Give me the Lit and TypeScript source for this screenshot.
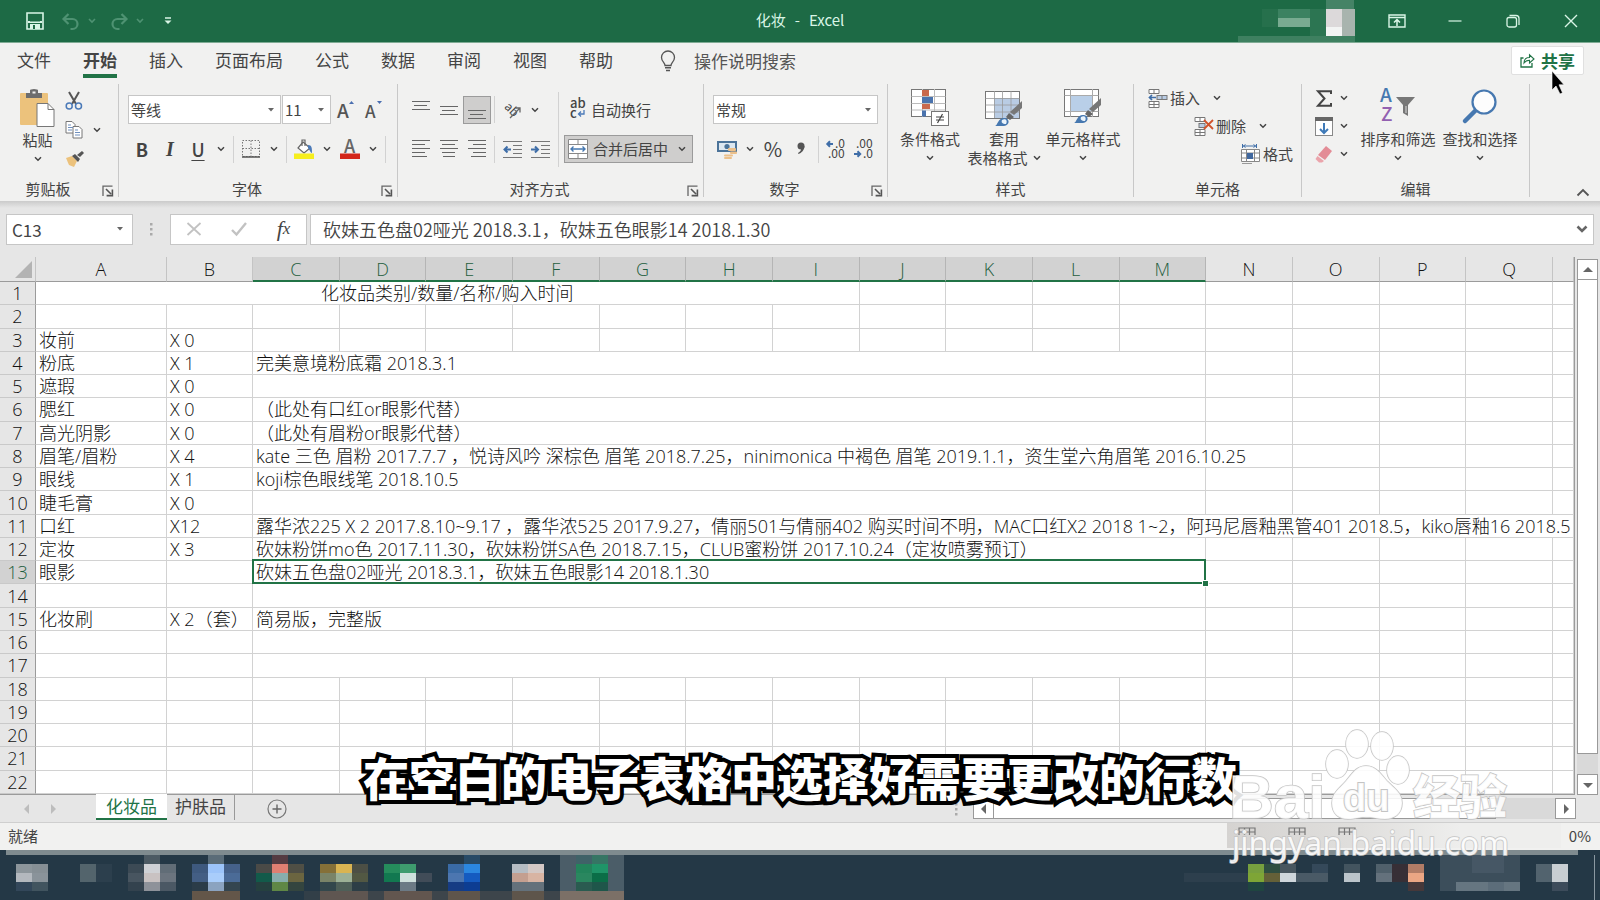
import { LitElement, html, svg, css, nothing } from "lit";
import { customElement } from "lit/decorators.js";
import { classMap } from "lit/directives/class-map.js";

const icon = (w: number, h: number, body: unknown) => html`<svg
  class="ico"
  width=${w}
  height=${h}
  viewBox="0 0 ${w} ${h}"
  aria-hidden="true"
>${body}</svg>`;

const chevron = () => icon(8, 6, svg`<path d="M1 1.2 4 4.2 7 1.2" fill="none" stroke="#444" stroke-width="1.5"/>`);
const triangle = () => icon(8, 6, svg`<path d="M1 1h6L4 4.6z" fill="#666"/>`);
const launcher = () =>
  icon(12, 12, svg`<path d="M1 11V1.2h9.5" fill="none" stroke="#666" stroke-width="1.3"/><path d="M4 4l5 5M10.4 4.6v6H4.6" fill="none" stroke="#555" stroke-width="1.6"/>`);

const lines = (rows: Array<[number, number, number]>) =>
  icon(18, 20, rows.map(([x, y, w]) => svg`<rect x=${x} y=${y} width=${w} height="1" fill="#666"/>`));

const brush = svg`<path d="M37 13 37 20 29 27 25 24z" fill="#777"/><path d="M24 25l5 4-4 3-4-3z" fill="#666"/><path d="M10 38c3-1 3-9 10-8 5 1 5 7-1 8z" fill="#4678b0"/><path d="M17 32c3-2 6 0 4 4-4 0-5-2-4-4z" fill="#e8f2fb"/>`;

const I = {
  save: () =>
    icon(18, 18, svg`<path d="M1 1h16v16H1z" fill="none" stroke="#d9f5e6" stroke-width="1.600"/><path d="M2 9.5h14v1.5H2zM4 12h10v5H4z" fill="#d9f5e6"/><path d="M7 13h2v4H7z" fill="#1d6a45"/><path d="M2 9h2v2H2zM14 9h2v2h-2z" fill="#d9f5e6"/>`),
  undo: () =>
    icon(18, 17, svg`<path d="M6.500 1 1.500 6l5 5M2 6h8.500a5 5 0 0 1 0 10H8.500" fill="none" stroke="#4e9272" stroke-width="2.2"/>`),
  redo: () =>
    icon(18, 17, svg`<path d="M11.500 1l5 5-5 5M16 6H7.500a5 5 0 0 0 0 10h2" fill="none" stroke="#4e9272" stroke-width="2.200"/>`),
  dimChev: () => icon(8, 6, svg`<path d="M1 1l3 3 3-3" fill="none" stroke="#4e9272" stroke-width="1.6"/>`),
  customise: () => icon(8, 8, svg`<path d="M1 1h6" stroke="#d9f5e6" stroke-width="1.5"/><path d="M.5 3.500h7L4 7z" fill="#d9f5e6"/>`),
  display: () =>
    icon(18, 14, svg`<path d="M1 1h16v12H1zM1 3.500h16" fill="none" stroke="#d9f5e6" stroke-width="1.4"/><path d="M9 12V6M6 8.500 9 5.600l3 2.900" fill="none" stroke="#d9f5e6" stroke-width="1.500"/>`),
  min: () => icon(14, 14, svg`<path d="M.5 7h13" stroke="#d9f5e6" stroke-width="1.200"/>`),
  restore: () =>
    icon(14, 14, svg`<rect x="1" y="3.500" width="9.500" height="9.500" rx="2" fill="none" stroke="#d9f5e6" stroke-width="1.300"/><path d="M3.500 1.500H10a3 3 0 0 1 3 3V11" fill="none" stroke="#d9f5e6" stroke-width="1.300"/>`),
  close: () => icon(14, 14, svg`<path d="M1 1l12 12M13 1 1 13" stroke="#d9f5e6" stroke-width="1.400"/>`),
  bulb: () =>
    icon(16, 22, svg`<path d="M5 15.500c0-3-3.500-4-3.500-8a6.500 6.500 0 0 1 13 0c0 4-3.500 5-3.500 8z" fill="none" stroke="#555" stroke-width="1.300"/><path d="M5 17.800h6M6 20.500h4" stroke="#555" stroke-width="1.500"/>`),
  share: () =>
    icon(15, 15, svg`<path d="M3.500 5H1v9h11v-4" fill="none" stroke="#217346" stroke-width="1.300"/><path d="M4 10c0-4 2.500-5.500 5.500-5.500V1.800L14 6l-4.500 4V7.200C7 7.200 5.500 7.800 4 10z" fill="none" stroke="#217346" stroke-width="1.100"/>`),
  paste: () =>
    icon(35, 38, svg`<rect x="0" y="4" width="28" height="32" rx="1" fill="#ecc27c"/><path d="M6 4h4V1.500Q10 0 14 0t4 1.500V4h4v5H6z" fill="#6d6d6d"/><rect x="12.500" y="2.500" width="3" height="2" fill="#f1f1f0"/><path d="M17 14.500h11l6 6V37.500H17z" fill="#fff" stroke="#777"/><path d="M28 14.500v6h6" fill="none" stroke="#777"/>`),
  cut: () =>
    icon(18, 19, svg`<path d="M4 1l7 12M14 1 7 13" stroke="#555" stroke-width="2"/><circle cx="4.200" cy="15" r="3" fill="none" stroke="#4b7ab8" stroke-width="1.500"/><circle cx="13.500" cy="15" r="3" fill="none" stroke="#4b7ab8" stroke-width="1.500"/>`),
  copy: () =>
    icon(18, 19, svg`<path d="M1 1.500h6l3 3V13H1z" fill="#fff" stroke="#777"/><path d="M8 6.500h6l3 3V18H8z" fill="#fff" stroke="#777"/><path d="M3 5h3M3 7.500h5M3 10h4M10 10h3M10 12.500h5M10 15h5" stroke="#6f8fbd"/>`),
  painter: () =>
    icon(19, 17, svg`<path d="M1 8l6-2 5 5-3 6-5-2z" fill="#ecc27c"/><path d="M7 6l3-2 5 5-2 3z" fill="#555"/><path d="M12 5l5-4 2 2-4 4z" fill="#555"/>`),
  growA: () =>
    icon(18, 20, svg`<text x="0" y="18" font-size="19" font-weight="500" fill="#555">A</text><path d="M12 4l2.500-3L17 4z" fill="#4b6fb0"/>`),
  shrinkA: () =>
    icon(18, 20, svg`<text x="0" y="18" font-size="17" font-weight="500" fill="#555">A</text><path d="M12 1h5l-2.500 3z" fill="#4b6fb0"/>`),
  borders: () =>
    icon(18, 18, svg`<path d="M.5.500h17v16H.5zM9 .500v16M.5 8.500h17" fill="none" stroke="#777" stroke-dasharray="1.500 1.500"/><path d="M0 17h18" stroke="#555" stroke-width="1.500"/>`),
  fill: () =>
    icon(20, 20, svg`<path d="M9 3l7 6-6 5-6-5z" fill="#fff" stroke="#666" stroke-width="1.200"/><path d="M8 7V1h3v6" fill="none" stroke="#666" stroke-width="1.200"/><path d="M14 6c4 0 4 3 4 8-1.500 0-2-3-4-5z" fill="#4b7ab8"/><rect y="14.500" width="20" height="5.500" fill="#f6ee1e"/>`),
  fontColor: () =>
    icon(20, 20, svg`<text x="4" y="14" font-size="18" font-weight="500" fill="#666">A</text><rect y="14.500" width="20" height="5.500" fill="#d3261a"/>`),
  orient: () =>
    icon(19, 19, svg`<text x="1" y="11" font-size="12" fill="#444" transform="rotate(45 5 9)">ab</text><path d="M7 18 17 8M12.500 8H17v4.500" fill="none" stroke="#666" stroke-width="1.300"/>`),
  wrap: () =>
    icon(16, 20, svg`<text x="0" y="8" font-size="13" font-weight="500" fill="#444">ab</text><text x="0" y="18" font-size="13" font-weight="500" fill="#444">c</text><path d="M14 10v4H9M11 11.500 8.500 14l2.500 2.500" fill="none" stroke="#4b7ab8" stroke-width="1.300"/>`),
  merge: () =>
    icon(20, 20, svg`<path d="M.5.500h19v19H.5z" fill="#fff" stroke="#888"/><path d="M.5 5.500h19M.5 14.500h19M10 0v5.500M10 14.500V20" stroke="#888"/><path d="M3 10h14M5.500 7.500 3 10l2.500 2.500M14.500 7.500 17 10l-2.500 2.500" fill="none" stroke="#4678b0" stroke-width="1.400"/>`),
  money: () =>
    icon(20, 19, svg`<rect x="0" y="1" width="20" height="11" fill="#4b7399"/><rect x="2" y="3" width="16" height="7" fill="#dce7f0"/><circle cx="10" cy="6.500" r="2.600" fill="#4b7399"/><g fill="#ecc08a"><rect x="11" y="8" width="8" height="3" rx="1"/><rect x="13" y="11.500" width="7" height="2.500" rx="1"/><rect x="7" y="14.500" width="9" height="2" rx="1"/><rect x="7" y="17" width="8" height="2" rx="1"/></g>`),
  comma: () =>
    icon(10, 14, svg`<circle cx="5" cy="4" r="3.500" fill="#555"/><path d="M8.500 4c0 4-3 7-6 8l-.5-1C4 10 5.500 8 5 6z" fill="#555"/>`),
  inc: () =>
    icon(20, 20, svg`<path d="M7 5H1.500M4 2.300 1.300 5 4 7.700" fill="none" stroke="#3f6ea8" stroke-width="2"/><text x="9" y="9" font-size="12" fill="#444">.0</text><text x="2" y="19" font-size="12" fill="#444">.00</text>`),
  dec: () =>
    icon(20, 20, svg`<text x="2" y="9" font-size="12" fill="#444">.00</text><path d="M0 15h6M3.500 12.300 6.200 15l-2.700 2.700" fill="none" stroke="#3f6ea8" stroke-width="2"/><text x="9" y="19" font-size="12" fill="#444">.0</text>`),
  cond: () =>
    icon(38, 38, svg`<rect x=".5" y="1.500" width="34" height="27" fill="#fff" stroke="#777"/><path d="M.5 8.500h34M.5 15.500h34M.5 22h34M11.500 1v28M23.500 1v28" stroke="#bbb"/><rect x="11" y="2" width="7" height="6" fill="#c9694c"/><rect x="11" y="9" width="11" height="6" fill="#4a73ad"/><rect x="11" y="16" width="8" height="5" fill="#c9694c"/><rect x="11" y="22.500" width="4" height="6" fill="#4a73ad"/><rect x="20.500" y="23.500" width="17" height="14" fill="#fff" stroke="#777"/><path d="M25 29h8M25 32h8M31.500 26l-5 9" stroke="#444" stroke-width="1.200"/>`),
  tableFmt: () =>
    icon(38, 38, svg`<rect x=".5" y="3.500" width="34" height="27" fill="#fff" stroke="#777"/><rect x="9" y="10" width="25" height="20" fill="#b9cce4"/><path d="M.5 10.500h34M.5 17h34M.5 24h34M9.500 3v27M17.500 3v27M26 3v27" stroke="#999" stroke-width=".8"/>${brush}`),
  cellStyle: () =>
    icon(38, 38, svg`<rect x=".5" y="1.500" width="34" height="27" fill="#fff" stroke="#777"/><path d="M.5 7.500h34M6.500 1v28M28.500 1v28M.5 23.500h34" stroke="#aaa"/><rect x="7" y="8" width="21" height="15" fill="#b9cfe8"/><g transform="translate(0 -3)">${brush}</g>`),
  insert: () =>
    icon(20, 19, svg`<path d="M1 .500h10v4H1zM6 .500v4M1 12.500h10v6H1zM6 12.500v6M1 15.500h10" fill="#fff" stroke="#777"/><rect x="9" y="6.500" width="10" height="4" fill="#b9cce4" stroke="#777"/><path d="M14 6.500v4" stroke="#777"/><path d="M8 8.500H1.500M4 6 1.500 8.500 4 11" fill="none" stroke="#3f6ea8" stroke-width="1.700"/>`),
  remove: () =>
    icon(20, 19, svg`<path d="M1 .500h10v4H1zM6 .500v4M1 12.500h10v6H1zM6 12.500v6M1 15.500h10" fill="#fff" stroke="#777"/><rect x="5" y="6.500" width="6" height="4" fill="#b9cce4" stroke="#777"/><path d="M10 3l9 9M19 3l-9 9" stroke="#d0532b" stroke-width="1.800"/>`),
  format: () =>
    icon(20, 20, svg`<path d="M1.500 0v4M15.500 0v4M2 2h13M4.500.500 2.500 2l2 1.500M12.500.500l2 1.500-2 1.500" fill="none" stroke="#3f6ea8"/><path d="M.5 5.500h18v12H.5zM5.500 5.500v12M13.500 5.500v12M.5 9h18M.5 14h18" fill="#fff" stroke="#888"/><rect x="6" y="9" width="6" height="6" fill="#41689f"/><path d="M1 19.500h10" stroke="#999"/>`),
  sigma: () => icon(18, 17, svg`<path d="M16 4V1.200H3L9.500 8.500 3 15.800h13V13" fill="none" stroke="#444" stroke-width="2"/>`),
  fillDown: () =>
    icon(18, 19, svg`<rect x=".5" y=".5" width="17" height="18" fill="#fff" stroke="#888"/><rect width="18" height="4" fill="#666"/><path d="M9 6v10M5 12l4 4 4-4" fill="none" stroke="#3f7ab8" stroke-width="2"/>`),
  eraser: () =>
    icon(18, 18, svg`<path d="M11 1l6 5-7 9-7-5z" fill="#e38c96"/><path d="M2.500 11l6.500 5-2 1.500H4L.5 14z" fill="#eba4ab"/>`),
  sort: () =>
    icon(36, 36, svg`<text x="0" y="14" font-size="19" font-weight="500" fill="#4678b0">A</text><text x="1" y="33" font-size="19" font-weight="500" fill="#9260b0">Z</text><path d="M16 9h19l-7 8v11l-5-3v-8z" fill="#777"/><path d="M26 18v7" stroke="#ddd"/>`),
  find: () =>
    icon(34, 36, svg`<path d="M2 33 14 21" stroke="#4678b0" stroke-width="4.500" stroke-linecap="round"/><circle cx="21" cy="14" r="11.500" fill="#fdfdfd" stroke="#4678b0" stroke-width="2.200"/>`),
  collapse: () => icon(14, 9, svg`<path d="M1.500 7.500 7 2l5.500 5.500" fill="none" stroke="#555" stroke-width="1.800"/>`),
  cancel: () => icon(16, 14, svg`<path d="M1.500 1l13 12M14.500 1l-13 12" stroke="#c2c2c2" stroke-width="1.800"/>`),
  accept: () => icon(16, 14, svg`<path d="M1 8l4.500 4.500L15 1" fill="none" stroke="#c2c2c2" stroke-width="2.400"/>`),
  expand: () => icon(12, 9, svg`<path d="M1.500 1.500 6 6l4.500-4.500" fill="none" stroke="#666" stroke-width="2.600"/>`),
  indentOut: () =>
    icon(19, 18, svg`<path d="M0 1.500h19M10 5.500h9M10 9.500h9M10 13.500h9M0 17.500h19" stroke="#777"/><path d="M8 9.500H1.500M4.500 6.500l-3 3 3 3" fill="none" stroke="#3f6ea8" stroke-width="2"/>`),
  indentIn: () =>
    icon(19, 18, svg`<path d="M0 1.500h19M10 5.500h9M10 9.500h9M10 13.500h9M0 17.500h19" stroke="#777"/><path d="M0 9.500h7M4 6.500l3 3-3 3" fill="none" stroke="#3f6ea8" stroke-width="2"/>`),
  plus: () =>
    icon(20, 20, svg`<circle cx="10" cy="10" r="9" fill="none" stroke="#777" stroke-width="1.200"/><path d="M10 5.500v9M5.500 10h9" stroke="#666" stroke-width="1.400"/>`),
  dots: () => icon(3, 13, svg`<path d="M0 0h2.500v2.500H0zM0 5h2.500v2.500H0zM0 10h2.500v2.500H0z" fill="#aaa"/>`),
  arrow: (d: string, c = "#666") => icon(10, 10, svg`<path d=${d} fill=${c}/>`),
};

const UP = "M5 2 10 7H0z";
const DOWN = "M0 3h10L5 8z";
const LEFT = "M7 0v10L2 5z";
const RIGHT = "M3 0v10l5-5z";

const COLS = "ABCDEFGHIJKLMNOPQ".split("");
const PICKED = new Set("CDEFGHIJKLM".split(""));

interface Row {
  a?: string;
  b?: string;
  c?: string;
  span?: number;
}

const ROWS: Row[] = [
  {},
  {},
  { a: "妆前", b: "X 0" },
  { a: "粉底", b: "X 1", c: "完美意境粉底霜 2018.3.1", span: 11 },
  { a: "遮瑕", b: "X 0", span: 11 },
  { a: "腮红", b: "X 0", c: "（此处有口红or眼影代替）", span: 11 },
  { a: "高光阴影", b: "X 0", c: "（此处有眉粉or眼影代替）", span: 11 },
  { a: "眉笔/眉粉", b: "X 4", c: "kate 三色 眉粉 2017.7.7 ，悦诗风吟 深棕色 眉笔 2018.7.25，ninimonica 中褐色 眉笔 2019.1.1，资生堂六角眉笔 2016.10.25", span: 12 },
  { a: "眼线", b: "X 1", c: "koji棕色眼线笔 2018.10.5", span: 11 },
  { a: "睫毛膏", b: "X 0", span: 11 },
  { a: "口红", b: "X12", c: "露华浓225 X 2 2017.8.10~9.17 ，露华浓525 2017.9.27，倩丽501与倩丽402 购买时间不明，MAC口红X2 2018 1~2，阿玛尼唇釉黑管401 2018.5，kiko唇釉16 2018.5", span: 16 },
  { a: "定妆", b: "X 3", c: "砍妹粉饼mo色 2017.11.30，砍妹粉饼SA色 2018.7.15，CLUB蜜粉饼 2017.10.24（定妆喷雾预订）", span: 11 },
  { a: "眼影", c: "砍妹五色盘02哑光 2018.3.1，砍妹五色眼影14 2018.1.30", span: 11 },
  { span: 11 },
  { a: "化妆刷", b: "X 2（套）", c: "简易版，完整版", span: 11 },
  { span: 11 },
  { span: 11 },
  {},
  {},
  {},
  {},
  {},
];

/* Taskbar tiles: column, row, width and height in 16x9 cells, colour. */
type Tile = [number, number, number, number, string];
const TILES: Tile[] = [
  [1, 1, 1, 1, "#8c959b"], [2, 1, 1, 1, "#868f95"], [1, 2, 1, 1, "#b3b8be"], [2, 2, 1, 1, "#8a939a"], [1, 3, 1, 1, "#33475a"], [2, 3, 1, 1, "#41545f"],
  [5, 1, 1, 2, "#53646c"], [6, 1, 1, 2, "#2c3f4d"],
  [9, 0, 1, 1, "#4c5a63"], [8, 1, 1, 1, "#3c4a55"], [9, 1, 1, 1, "#cfd1d5"], [10, 1, 1, 1, "#616d77"], [8, 2, 1, 1, "#485560"], [9, 2, 1, 1, "#c9c2c2"], [10, 2, 1, 1, "#6b747e"], [8, 3, 1, 1, "#33424e"], [9, 3, 1, 1, "#8e929a"], [10, 3, 1, 1, "#4b5864"],
  [13, 0, 1, 1, "#5a6c78"], [12, 1, 1, 1, "#3e597e"], [13, 1, 1, 1, "#9cc4fa"], [14, 1, 1, 1, "#45618a"], [12, 2, 1, 1, "#435e84"], [13, 2, 1, 1, "#a9cdfb"], [14, 2, 1, 1, "#4b6b97"], [12, 3, 1, 1, "#2b3c48"], [13, 3, 1, 1, "#8ba3c0"], [14, 3, 1, 1, "#34454f"], [12, 4, 3, 1, "#635649"],
  [17, 0, 1, 1, "#543b42"], [16, 1, 1, 1, "#4a4a47"], [17, 1, 1, 1, "#e07f72"], [18, 1, 1, 1, "#4f4f45"], [16, 2, 1, 1, "#125a4a"], [17, 2, 1, 1, "#87adad"], [18, 2, 1, 1, "#6b6540"], [16, 3, 1, 1, "#25403f"], [17, 3, 1, 1, "#5f8746"], [18, 3, 1, 1, "#34453f"], [19, 4, 1, 1, "#323f48"],
  [20, 1, 1, 1, "#857038"], [21, 1, 1, 1, "#d9b452"], [22, 1, 1, 1, "#4c4f45"], [20, 2, 1, 1, "#7a8468"], [21, 2, 1, 1, "#9cb096"], [22, 2, 1, 1, "#525843"], [20, 3, 1, 1, "#33474c"], [21, 3, 1, 1, "#4e5f58"], [22, 3, 1, 1, "#2d3e46"], [20, 4, 3, 1, "#5f5651"], [23, 4, 1, 1, "#3d454b"],
  [24, 1, 1, 1, "#258c5c"], [25, 1, 1, 1, "#3e9b6e"], [24, 2, 1, 1, "#127850"], [25, 2, 1, 1, "#cfe0dc"], [26, 2, 1, 1, "#414c58"], [25, 3, 1, 1, "#6c7a85"], [24, 4, 3, 1, "#62564f"], [27, 4, 1, 1, "#3d454b"],
  [29, 0, 1, 1, "#274a66"], [28, 1, 1, 1, "#3a6ba6"], [29, 1, 1, 1, "#2b87e0"], [28, 2, 1, 1, "#4c76b0"], [29, 2, 1, 1, "#155bc0"], [28, 3, 1, 1, "#163c84"], [29, 3, 1, 1, "#0d3d92"], [28, 4, 2, 1, "#5f554b"], [30, 4, 2, 1, "#3d454b"],
  [32, 1, 1, 1, "#b5bcc3"], [33, 1, 1, 1, "#d3c8c5"], [32, 2, 1, 1, "#c49f90"], [33, 2, 1, 1, "#d8b4a3"], [32, 3, 2, 1, "#64717b"], [32, 4, 2, 1, "#5e554b"], [34, 4, 1, 1, "#3d454b"],
  [35, 0, 4, 4, "#4b5d68"], [35, 4, 4, 1, "#7c7067"], [36, 0, 1, 1, "#406268"], [37, 0, 1, 1, "#367564"], [36, 1, 1, 1, "#23845b"], [37, 1, 1, 1, "#1f9568"], [36, 2, 1, 1, "#2a875f"], [37, 2, 1, 1, "#0b6e47"], [36, 3, 1, 1, "#2a5b50"], [37, 3, 1, 1, "#1f564a"],
];
/* Tray tiles, counted from column 74. */
const TRAY: Tile[] = [
  [0, 2, 4, 1, "#2d3f4d"], [4, 1, 1, 1, "#779f3f"], [4, 2, 1, 1, "#7ea536"], [4, 3, 1, 1, "#1f4540"], [5, 1, 1, 1, "#2f4e41"], [5, 2, 1, 1, "#646038"], [6, 1, 1, 1, "#48565f"], [6, 2, 1, 1, "#cfd6db"], [7, 2, 2, 1, "#4a5a66"], [8, 1, 1, 1, "#35495a"],
  [10, 1, 1, 1, "#43545f"], [10, 2, 1, 1, "#bcc5cb"], [12, 1, 1, 1, "#50606b"], [12, 2, 1, 1, "#64717c"], [13, 1, 1, 2, "#372f36"], [14, 1, 1, 1, "#b17c66"], [14, 2, 1, 1, "#eba684"], [14, 3, 1, 1, "#46383a"],
  [16, 0, 5, 3, "#3c4e5b"], [18, 0, 2, 2, "#465765"], [16, 3, 1, 1, "#3c4e5b"], [17, 3, 2, 1, "#667681"], [19, 3, 1, 1, "#5c6d7a"], [20, 3, 1, 1, "#667681"], [22, 1, 1, 2, "#52636e"], [23, 1, 1, 2, "#c8ced2"], [23, 3, 1, 1, "#3d4c5b"],
];
const tiles = (list: Tile[], cols: number) =>
  html`<svg class="ico" width=${cols * 16} height="45" shape-rendering="crispEdges" aria-hidden="true">
    ${list.map(([c, r, w, h, f]) => svg`<rect x=${c * 16} y=${r * 9} width=${w * 16} height=${h * 9} fill=${f}/>`)}
  </svg>`;

@customElement("app-root")
export class AppRoot extends LitElement {
  static styles = css`
    :host {
      display: flex;
      flex-direction: column;
      position: relative;
      height: 100vh;
      overflow: hidden;
      font-family: "Noto Sans CJK SC", sans-serif;
      font-size: 15px;
      line-height: 20px;
      color: #444;
      background: #e6e6e6;
    }
    * { box-sizing: border-box; }
    button, input, select { font: inherit; color: inherit; border: 0; padding: 0; margin: 0; background: none; border-radius: 0; }
    button { display: flex; align-items: center; justify-content: center; white-space: nowrap; }
    select { appearance: none; }
    .ico { display: block; flex: none; overflow: visible; }

    .title { flex: none; display: grid; grid-template-columns: 1fr auto 1fr; align-items: center; height: 43px; background: #1d6a45; border-bottom: 1px solid #7fab94; color: #d9f5e6; }
    .quick { display: flex; align-items: center; padding-left: 26px; }
    .quick button:nth-child(2) { margin-left: 18px; }
    .quick button:nth-child(3), .quick button:nth-child(5) { margin-left: 8px; }
    .quick button:nth-child(4) { margin-left: 14px; }
    .quick button:nth-child(6) { margin-left: 20px; }
    .name { display: flex; gap: 9px; padding-bottom: 2px; }
    .wins { display: flex; justify-content: flex-end; align-self: stretch; align-items: center; }
    .wins button { width: 58px; height: 42px; }
    .user { height: 42px; margin-right: 12px; }

    .tabs { flex: none; display: flex; align-items: center; height: 41px; padding: 0 16px 6px 17px; background: #f1f1f0; font-size: 17px; }
    .tabs nav { display: flex; gap: 32px; }
    .tab { position: relative; height: 34px; line-height: 32px; color: #444; text-decoration: none; }
    .tab.on { font-weight: 700; }
    .tab.on::after { content: ""; position: absolute; left: 0; right: 0; bottom: 0; height: 4px; background: #217346; }
    .tell { gap: 18px; margin-left: 47px; color: #555; font-size: 17px; }
    .share { margin-left: auto; gap: 6px; width: 73px; height: 29px; border: 1px solid #e0e0e0; border-radius: 2px; background: #fff; color: #217346; font-weight: 700; font-size: 17px; }

    .ribbon { flex: none; display: grid; grid-template-columns: 119px 279px 306px 184px 246px 168px 228px 1fr; height: 117px; padding-bottom: 4px; background: #f1f1f0; }
    .group { position: relative; display: flex; flex-direction: column; border-right: 1px solid #c8c8c8; }
    .group h2 { margin: 0; height: 16px; font-size: 15px; line-height: 16px; font-weight: 400; text-align: center; }
    .group h2.with { padding-right: 22px; }
    .body { flex: 1; display: flex; }
    .launch { position: absolute; right: 4px; bottom: 0; }
    .last { border-right: 0; align-items: flex-end; justify-content: flex-end; padding: 0 10px 0 0; }
    .stack { display: flex; flex-direction: column; gap: 11px; padding-top: 11px; }
    .line { display: flex; align-items: center; height: 29px; }
    .line.tight { height: 28px; }
    .ib { width: 28px; height: 28px; }
    .ib.on { background: #cfcecd; outline: 1px solid #9b9b9b; outline-offset: -1px; }
    .cv { width: 18px; height: 28px; }
    .sep { width: 1px; height: 27px; margin: 0 3px; background: #d2d2d2; }
    .sep.tall { height: 75px; margin: 8px 5px 0 4px; }
    .b { font-weight: 700; font-size: 18px; }
    .i { font: italic 700 20px "Liberation Serif", serif; }
    .u { font-weight: 500; font-size: 18px; text-decoration: underline; text-underline-offset: 3px; }
    .pct { font-size: 20px; }
    .combo { display: grid; align-items: center; height: 29px; border: 1px solid #c6c6c6; background: #fff; }
    .combo > * { grid-area: 1 / 1; }
    .combo select, .combo input { width: 100%; height: 100%; padding-left: 2px; outline: 0; min-width: 0; }
    .combo .ico { justify-self: end; margin-right: 5px; pointer-events: none; }
    .font { width: 153px; }
    .size { width: 49px; margin: 0 1px; }
    .fmt { width: 165px; }
    .merge { gap: 5px; width: 129px; height: 28px; padding: 0 6px 0 3px; border: 1px solid #9b9b9b; background: #cfcecd; }
    .merge .ico:last-child { margin-left: auto; }
    .wrapbtn { gap: 5px; height: 28px; padding-left: 6px; }
    .big { flex-direction: column; justify-content: flex-start; padding-top: 4px; }
    .big .art { display: flex; height: 41px; }
    .big .row { display: flex; align-items: center; gap: 5px; height: 19px; }
    .clip .big { width: 41px; padding-top: 5px; }
    .clip .body { padding-left: 17px; }
    .minis { display: grid; grid-template-columns: 18px 18px; grid-auto-rows: 29px; align-items: center; column-gap: 5px; padding: 2px 0 0 7px; }
    .padl { padding-left: 9px; }
    .style .body { padding-left: 8px; gap: 2px; }
    .w68 { width: 68px; }
    .w76 { width: 76px; }
    .w78 { width: 78px; }
    .steps { display: flex; flex-direction: column; align-items: flex-start; }
    .steps button { gap: 2px; height: 28px; }
    .steps .ico:nth-child(3) { margin-left: 11px; }
    .cells .steps { padding-left: 14px; }
    .cells button:nth-child(2) { margin-left: 46px; }
    .cells button:nth-child(3) { margin-left: 93px; }
    .edit .steps { padding: 0 7px 0 13px; }
    .edit .steps button { gap: 7px; }
    .edit .body { gap: 4px; }

    .fbar { flex: none; display: flex; align-items: center; height: 56px; padding: 0 6px; background: linear-gradient(#cbcbcb, #e6e6e6 7px); font-size: 18px; }
    .fbar > div, .fbar > label { height: 31px; }
    .namebox { width: 127px; font-size: 17px; }
    .namebox input.cell { padding-left: 5px; }
    .namebox .ico { margin-right: 8px; }
    .grip { display: flex; align-items: center; width: 37px; justify-content: center; }
    .acts { display: flex; align-items: center; width: 137px; border: 1px solid #c6c6c6; background: #fff; }
    .acts button { flex: 1; height: 29px; }
    .fx { font: italic 400 22px "Liberation Serif", serif; }
    .fx sub { font-size: 17px; vertical-align: baseline; }
    .formula { flex: 1; margin-left: 3px; font-size: 18px; font-weight: 350; }
    .formula input.cell { padding-left: 12px; }

    .work { flex: 1; min-height: 0; display: flex; }
    .sheet { flex: 1; min-width: 0; overflow: hidden; border-bottom: 1px solid #9b9b9b; background: #fff; }
    table { width: 100%; height: 100%; table-layout: fixed; border-collapse: separate; border-spacing: 0; font-family: "Open Sans", "Noto Sans CJK SC", sans-serif; font-size: 18px; line-height: 20px; font-weight: 300; color: #111; }
    .cr { width: 36px; }
    .ca { width: 131px; }
    .cb { width: 86px; }
    .cz { width: 21px; }
    th { padding: 0; font-weight: 300; color: #111; background: #e6e6e6; border-right: 1px solid #c4c4c4; border-bottom: 1px solid #c9c9c9; }
    thead th { height: 25px; font-size: 18px; border-bottom: 1px solid #9b9b9b; }
    tbody th { border-right-color: #9b9b9b; }
    thead th.on { background: #d2d2d2; color: #1f5e3e; border-bottom: 2px solid #217346; border-right-color: #b5b5b5; }
    tbody th.on { background: #d2d2d2; color: #1f5e3e; }
    .corner { display: block; margin: 0 3px 0 auto; }
    td { padding: 0 3px; border-right: 1px solid #d2d2d2; border-bottom: 1px solid #d2d2d2; white-space: nowrap; }
    td.head { text-align: center; }
    td.pick { position: relative; }
    td.pick::before { content: ""; position: absolute; inset: -2px -1px -1px -1px; border: 2px solid #217346; }
    td.pick::after { content: ""; position: absolute; right: -3px; bottom: -3px; width: 5px; height: 5px; background: #217346; outline: 1px solid #fff; }

    .vbar { flex: none; display: flex; flex-direction: column; width: 26px; padding: 2px 2px 0 2px; border-left: 1px solid #9b9b9b; background: #e6e6e6; }
    .vbar button, .hbar button { flex: none; width: 21px; height: 21px; border: 1px solid #999; background: #fff; }
    .vtrack { flex: 1; display: flex; width: 21px; background: #d9d9d9; }
    .vthumb { width: 21px; height: 96%; border: 1px solid #999; border-top: 0; background: #fff; }

    .strip { flex: none; display: flex; align-items: flex-start; height: 28px; padding-right: 24px; border-bottom: 1px solid #cfcfcf; }
    .moves { display: flex; gap: 16px; width: 96px; padding: 9px 0 0 22px; }
    .strip .leaf { height: 25px; padding-bottom: 3px; font-size: 17px; line-height: 22px; }
    .strip .leaf.on { width: 71px; height: 26px; margin-top: -1px; padding-bottom: 0; background: #fff; border-bottom: 2px solid #217346; color: #217346; }
    .leaf.off { width: 68px; border-right: 1px solid #999; }
    .add { margin: 4px 0 0 32px; }
    .gripx { margin: 8px 15px 0 auto; }
    .hbar { display: flex; width: 603px; margin-top: 3px; background: #d9d9d9; }
    .hthumb { flex: 1; margin-right: 59px; border: 1px solid #999; border-left: 0; background: #fff; }
    .status { flex: none; display: flex; align-items: center; height: 27px; padding: 0 9px 2px 8px; background: #f1f1f0; font-size: 15px; }
    .views { display: flex; gap: 32px; align-self: stretch; align-items: flex-start; width: 334px; margin-left: auto; margin-right: 8px; padding-left: 11px; background: linear-gradient(90deg, #d5d3d1, #e0dfdd 40%, #eeeeed 70%); }
    .band { flex: none; height: 5px; margin: 0 22px 0 6px; background: #7f8b8f; }
    .foot { flex: none; background: #243846; }
    .task { display: flex; justify-content: space-between; height: 45px; }
    .tray { display: flex; padding-right: 5px; }
    .peek { width: 1px; margin-left: 10px; background: #8b98a1; }

    .caption { position: absolute; left: 0; right: 0; bottom: 96px; margin: 0; font-size: 46px; line-height: 56px; font-weight: 900; text-align: center; color: #fff; -webkit-text-stroke: 8px #000; stroke-linejoin: round; paint-order: stroke fill; pointer-events: none; }
    .mark { position: absolute; right: 84px; bottom: 32px; overflow: visible; pointer-events: none; }
    .pointer { position: absolute; right: 36px; top: 71px; pointer-events: none; }
  `;

  private group(cls: string, label: string, body: unknown, launch = true) {
    return html`<section class="group ${cls}">
      <div class="body">${body}</div>
      <h2 class=${classMap({ with: launch })}>${label}</h2>
      ${launch ? html`<button class="launch" aria-label="${label}设置">${launcher()}</button>` : nothing}
    </section>`;
  }

  private ib(label: string, body: unknown, on = false) {
    return html`<button class=${classMap({ ib: true, on })} aria-label=${label}>${body}</button>`;
  }

  private cv(label = "更多") {
    return html`<button class="cv" aria-label=${label}>${chevron()}</button>`;
  }

  private sep() {
    return html`<span class="sep"></span>`;
  }

  private titleBar() {
    return html`<header class="title">
      <div class="quick">
        <button aria-label="保存">${I.save()}</button>
        <button aria-label="撤消">${I.undo()}</button>
        <button aria-label="撤消列表">${I.dimChev()}</button>
        <button aria-label="恢复">${I.redo()}</button>
        <button aria-label="恢复列表">${I.dimChev()}</button>
        <button aria-label="自定义快速访问工具栏">${I.customise()}</button>
      </div>
      <div class="name"><span>化妆</span><span>-</span><span>Excel</span></div>
      <div class="wins">
        <svg class="user" width="118" height="42" aria-hidden="true">
          <rect x="0" y="36" width="117" height="6" fill="#4d8a6c" opacity=".7"/>
          <rect x="24" y="9" width="16" height="18" fill="#26704c"/>
          <rect x="40" y="9" width="32" height="9" fill="#3c8261"/>
          <rect x="40" y="18" width="32" height="9" fill="#79ab91"/>
          <rect x="72" y="9" width="16" height="27" fill="#2c7552"/>
          <rect x="88" y="0" width="28" height="9" fill="#458366"/>
          <rect x="88" y="9" width="16" height="18" fill="#dcd9da"/>
          <rect x="88" y="27" width="16" height="9" fill="#f2f4f3"/>
          <rect x="104" y="9" width="13" height="27" fill="#a8b4ae"/>
        </svg>
        <button aria-label="功能区显示选项">${I.display()}</button>
        <button aria-label="最小化">${I.min()}</button>
        <button aria-label="还原">${I.restore()}</button>
        <button aria-label="关闭">${I.close()}</button>
      </div>
    </header>`;
  }

  private tabBar() {
    const names = ["文件", "开始", "插入", "页面布局", "公式", "数据", "审阅", "视图", "帮助"];
    return html`<div class="tabs">
      <nav>${names.map((n) => html`<a href="#" class=${classMap({ tab: true, on: n === "开始" })}>${n}</a>`)}</nav>
      <button class="tell">${I.bulb()}操作说明搜索</button>
      <button class="share">${I.share()}共享</button>
    </div>`;
  }

  private ribbon() {
    const top = lines([[0, 1, 18], [2, 5, 13], [0, 9, 18]]);
    const mid = lines([[0, 6, 18], [2, 10, 13], [0, 14, 18]]);
    const bot = lines([[0, 10, 18], [2, 14, 13], [0, 18, 18]]);
    const left = lines([[0, 1, 18], [0, 5, 13], [0, 9, 18], [0, 13, 13], [0, 17, 15]]);
    const mid2 = lines([[0, 1, 18], [2, 5, 13], [0, 9, 18], [2, 13, 13], [3, 17, 12]]);
    const right = lines([[0, 1, 18], [5, 5, 13], [0, 9, 18], [5, 13, 13], [3, 17, 15]]);
    return html`<div class="ribbon">
      ${this.group("clip", "剪贴板", html`
        <button class="big"><span class="art">${I.paste()}</span><span class="row">粘贴</span><span class="row">${chevron()}</span></button>
        <div class="minis">
          <button aria-label="剪切">${I.cut()}</button><span></span>
          <button aria-label="复制">${I.copy()}</button>${this.cv()}
          <button aria-label="格式刷">${I.painter()}</button><span></span>
        </div>`)}
      ${this.group("", "字体", html`<div class="stack padl">
        <div class="line">
          <label class="combo font"><select aria-label="字体"><option>等线</option></select>${triangle()}</label>
          <label class="combo size"><select aria-label="字号"><option>11</option></select>${triangle()}</label>
          ${this.ib("增大字号", I.growA())}${this.ib("减小字号", I.shrinkA())}
        </div>
        <div class="line tight">
          <button class="ib b">B</button><button class="ib i">I</button><button class="ib u">U</button>${this.cv()}
          ${this.sep()}${this.ib("边框", I.borders())}${this.cv()}
          ${this.sep()}${this.ib("填充颜色", I.fill())}${this.cv()}${this.ib("字体颜色", I.fontColor())}${this.cv()}${this.sep()}
        </div></div>`)}
      ${this.group("", "对齐方式", html`<div class="stack padl">
          <div class="line">${this.ib("顶端对齐", top)}${this.ib("垂直居中", mid)}${this.ib("底端对齐", bot, true)}${this.sep()}${this.ib("方向", I.orient())}${this.cv()}</div>
          <div class="line tight">${this.ib("左对齐", left)}${this.ib("居中", mid2)}${this.ib("右对齐", right)}${this.sep()}${this.ib("减少缩进量", I.indentOut())}${this.ib("增加缩进量", I.indentIn())}</div>
        </div>
        <span class="sep tall"></span>
        <div class="stack">
          <div class="line"><button class="wrapbtn">${I.wrap()}自动换行</button></div>
          <div class="line tight"><button class="merge">${I.merge()}合并后居中${chevron()}</button></div>
        </div>`)}
      ${this.group("", "数字", html`<div class="stack padl">
        <div class="line"><label class="combo fmt"><select aria-label="数字格式"><option>常规</option></select>${triangle()}</label></div>
        <div class="line tight">${this.ib("会计数字格式", I.money())}${this.cv()}<button class="ib pct">%</button>${this.ib("千位分隔样式", I.comma())}${this.sep()}${this.ib("增加小数位数", I.inc())}${this.ib("减少小数位数", I.dec())}</div></div>`)}
      ${this.group("style", "样式", html`
        <button class="big w68"><span class="art">${I.cond()}</span><span class="row">条件格式</span><span class="row">${chevron()}</span></button>
        <button class="big w76"><span class="art">${I.tableFmt()}</span><span class="row">套用</span><span class="row">表格格式${chevron()}</span></button>
        <button class="big w78"><span class="art">${I.cellStyle()}</span><span class="row">单元格样式</span><span class="row">${chevron()}</span></button>`, false)}
      ${this.group("cells", "单元格", html`<div class="steps">
        <button>${I.insert()}<span>插入</span>${chevron()}</button>
        <button>${I.remove()}<span>删除</span>${chevron()}</button>
        <button>${I.format()}<span>格式</span></button></div>`, false)}
      ${this.group("edit", "编辑", html`<div class="steps">
          <button aria-label="自动求和">${I.sigma()}${chevron()}</button>
          <button aria-label="填充">${I.fillDown()}${chevron()}</button>
          <button aria-label="清除">${I.eraser()}${chevron()}</button>
        </div>
        <button class="big w78"><span class="art">${I.sort()}</span><span class="row">排序和筛选</span><span class="row">${chevron()}</span></button>
        <button class="big w78"><span class="art">${I.find()}</span><span class="row">查找和选择</span><span class="row">${chevron()}</span></button>`, false)}
      <div class="group last"><button aria-label="折叠功能区">${I.collapse()}</button></div>
    </div>`;
  }

  private formulaBar() {
    return html`<div class="fbar">
      <label class="combo namebox"><input class="cell" aria-label="名称框" value="C13" />${triangle()}</label>
      <div class="grip">${I.dots()}</div>
      <div class="acts">
        <button aria-label="取消">${I.cancel()}</button>
        <button aria-label="输入">${I.accept()}</button>
        <button class="fx" aria-label="插入函数">f<sub>x</sub></button>
      </div>
      <label class="combo formula"><input class="cell" aria-label="编辑栏" value="砍妹五色盘02哑光 2018.3.1，砍妹五色眼影14 2018.1.30" />${I.expand()}</label>
    </div>`;
  }

  private row(r: Row, i: number) {
    const n = i + 1;
    const th = html`<th scope="row" class=${classMap({ on: n === 13 })}>${n}</th>`;
    const blanks = (k: number) => Array.from({ length: k }, () => html`<td></td>`);
    if (n === 1) {
      return html`<tr>${th}<td class="head" colspan="9">化妆品类别/数量/名称/购入时间</td>${blanks(9)}</tr>`;
    }
    const span = r.span ?? 1;
    return html`<tr>${th}<td>${r.a}</td><td>${r.b}</td>
      <td class=${classMap({ pick: n === 13 })} colspan=${span}>${r.c}</td>${blanks(16 - span)}</tr>`;
  }

  private sheet() {
    return html`<main class="work">
      <div class="sheet"><table>
        <colgroup><col class="cr" /><col class="ca" /><col class="cb" />${COLS.slice(2).map(() => html`<col />`)}<col class="cz" /></colgroup>
        <thead><tr>
          <th aria-label="全选"><svg class="corner" width="17" height="17" aria-hidden="true"><path d="M17 0v17H0z" fill="#b3b3b3"/></svg></th>
          ${COLS.map((c) => html`<th scope="col" class=${classMap({ on: PICKED.has(c) })}>${c}</th>`)}<th></th>
        </tr></thead>
        <tbody>${ROWS.map((r, i) => this.row(r, i))}</tbody>
      </table></div>
      <div class="vbar">
        <button aria-label="向上滚动">${I.arrow(UP)}</button>
        <div class="vtrack"><div class="vthumb"></div></div>
        <button aria-label="向下滚动">${I.arrow(DOWN)}</button>
      </div>
    </main>`;
  }

  private bottom() {
    return html`<div class="strip">
        <div class="moves">${I.arrow(LEFT, "#bdbdbd")}${I.arrow(RIGHT, "#bdbdbd")}</div>
        <button class="leaf on">化妆品</button>
        <button class="leaf off">护肤品</button>
        <button class="add" aria-label="新工作表">${I.plus()}</button>
        <div class="gripx">${I.dots()}</div>
        <div class="hbar">
          <button aria-label="向左滚动">${I.arrow(LEFT)}</button>
          <div class="hthumb"></div>
          <button aria-label="向右滚动">${I.arrow(RIGHT)}</button>
        </div>
      </div>
      <div class="status">
        <span>就绪</span>
        <div class="views">${[0, 1, 2].map(() => icon(18, 12, svg`<path d="M1 12V5h16v7M6.500 5v7M11.500 5v7M1 9h16" fill="none" stroke="#777" stroke-width="1.200"/>`))}</div>
        <span>0%</span>
      </div>
      <footer class="foot">
        <div class="band"></div>
        <div class="task">${tiles(TILES, 39)}<div class="tray">${tiles(TRAY, 25)}<span class="peek"></span></div></div>
      </footer>`;
  }

  private overlays() {
    const paw: Array<[number, number, number, number]> = [[111, 36, 11, 14], [131, 16, 11, 14], [156, 18, 11, 14], [172, 42, 11, 14]];
    return html`<p class="caption">在空白的电子表格中选择好需要更改的行数</p>
      <svg class="mark" width="290" height="140" viewBox="0 0 290 140" fill="#fff" fill-opacity=".88" stroke="#c4c4c4" stroke-width="1.500" paint-order="stroke" aria-hidden="true">
        <text x="3" y="90" font-family="Liberation Sans, sans-serif" font-weight="700" font-size="62">Bai</text>
        ${paw.map(([x, y, rx, ry]) => svg`<ellipse cx=${x} cy=${y} rx=${rx} ry=${ry}/>`)}
        <path d="M140 38c10 0 15 8 21 15 8 8 15 12 15 22 0 11-8 16-17 16-7 0-12-2-19-2s-11 2-18 2c-9 0-16-5-16-16 0-10 7-14 14-22 6-7 10-15 20-15z"/>
        <text x="117" y="83" font-family="Liberation Sans, sans-serif" font-size="38" font-weight="700" stroke-width="2">du</text>
        <text x="187" y="86" font-size="47" font-weight="900">经验</text>
        <text x="6" y="127" font-family="Noto Sans, sans-serif" font-size="32">jingyan.baidu.com</text>
      </svg>
      <svg class="pointer" width="13" height="24" viewBox="0 0 13 24" aria-hidden="true"><path d="M1 0v19l4-4 4 8 2.500-1.200-3.500-8H13z" fill="#000" stroke="#fff" stroke-width=".6"/></svg>`;
  }

  render() {
    return html`${this.titleBar()}${this.tabBar()}${this.ribbon()}${this.formulaBar()}${this.sheet()}${this.bottom()}${this.overlays()}`;
  }
}
